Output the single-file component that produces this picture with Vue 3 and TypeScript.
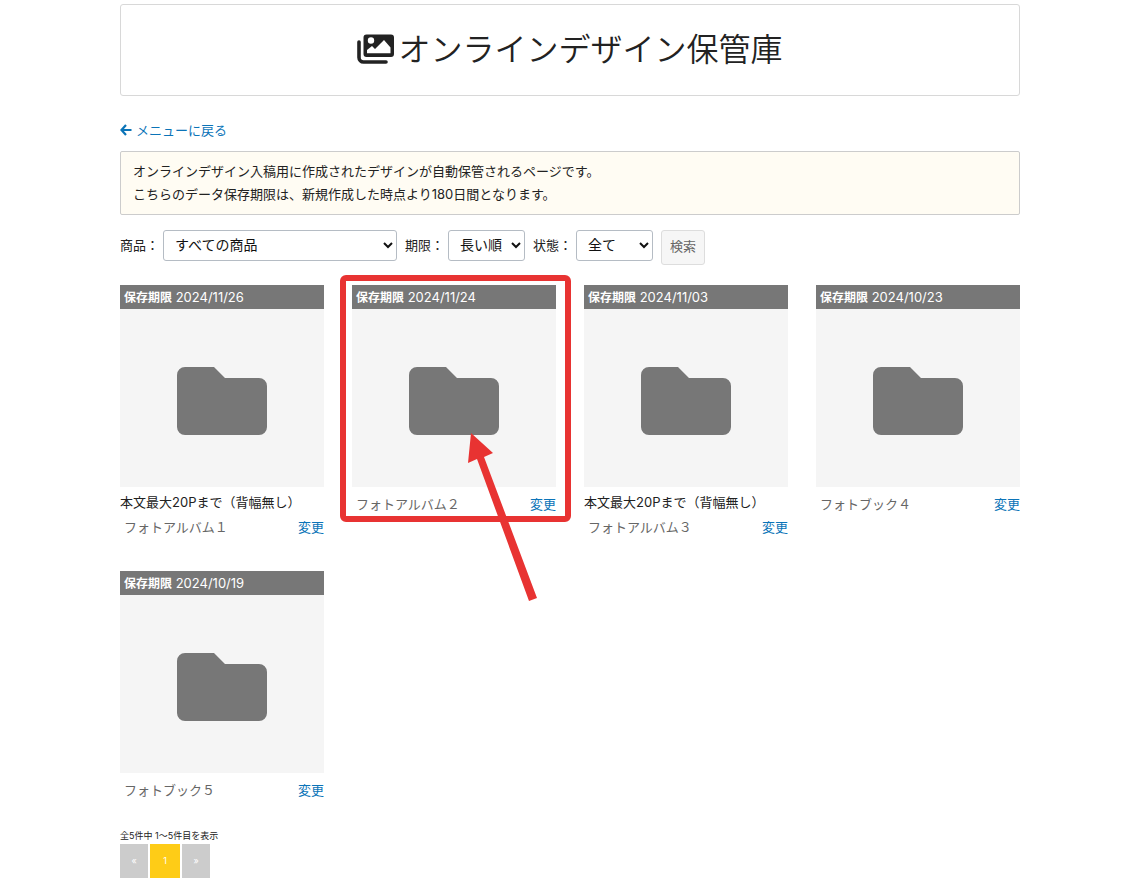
<script setup lang="ts">
import { ref } from 'vue'

interface Design {
  id: number
  expires: string
  title?: string
  name: string
  marked?: boolean
}

const product = ref('すべての商品')
const order = ref('長い順')
const state = ref('全て')

const designs: Design[] = [
  { id: 1, expires: '2024/11/26', title: '本文最大20Pまで（背幅無し）', name: 'フォトアルバム１' },
  { id: 2, expires: '2024/11/24', name: 'フォトアルバム２', marked: true },
  { id: 3, expires: '2024/11/03', title: '本文最大20Pまで（背幅無し）', name: 'フォトアルバム３' },
  { id: 4, expires: '2024/10/23', name: 'フォトブック４' },
  { id: 5, expires: '2024/10/19', name: 'フォトブック５' },
]
</script>

<template>
  <main class="page">
    <header class="hero">
      <h1>
        <svg class="hero-icon" viewBox="0 0 37 30" aria-hidden="true">
          <path d="M2 8V23.500a4.500 4.500 0 0 0 4.500 4.500H29" fill="none" stroke="currentColor" stroke-width="3.600" stroke-linecap="round" />
          <path fill="currentColor" fill-rule="evenodd" d="M9.500 0.500H34a3 3 0 0 1 3 3V20a3 3 0 0 1-3 3H9.500a3 3 0 0 1-3-3V3.500a3 3 0 0 1 3-3ZM14 3.300a3.200 3.200 0 1 0 0 6.400a3.200 3.200 0 0 0 0-6.400ZM10 19.300H33.500V13.500L27 6L18 15L15 12L10 16Z" />
        </svg>
        <span>オンラインデザイン保管庫</span>
      </h1>
    </header>

    <a class="back" href="#">
      <svg viewBox="0 0 12 12" aria-hidden="true">
        <path d="M6 1 1.500 6 6 11M1.500 6H11.500" fill="none" stroke="currentColor" stroke-width="2.200" />
      </svg>
      <span>メニューに戻る</span>
    </a>

    <p class="notice">
      オンラインデザイン入稿用に作成されたデザインが自動保管されるページです。<br />
      こちらのデータ保存期限は、新規作成した時点より180日間となります。
    </p>

    <form class="filters" @submit.prevent>
      <label for="product">商品：</label>
      <select id="product" v-model="product" class="wide"><option>すべての商品</option></select>
      <label for="order">期限：</label>
      <select id="order" v-model="order"><option>長い順</option><option>短い順</option></select>
      <label for="state">状態：</label>
      <select id="state" v-model="state"><option>全て</option></select>
      <button type="submit">検索</button>
    </form>

    <section class="designs">
      <article v-for="d in designs" :key="d.id" class="card">
        <div class="expires"><b>保存期限</b> {{ d.expires }}</div>
        <div class="thumb">
          <svg viewBox="0 0 90 68" aria-hidden="true">
            <path fill="#777" d="M8 0H37L48 11H82a8 8 0 0 1 8 8V60a8 8 0 0 1-8 8H8a8 8 0 0 1-8-8V8a8 8 0 0 1 8-8Z" />
          </svg>
        </div>
        <div class="caption">
          <p v-if="d.title" class="title">{{ d.title }}</p>
          <div class="name-row">
            <span class="name">{{ d.name }}</span>
            <a href="#">変更</a>
          </div>
        </div>
        <template v-if="d.marked">
          <div class="marker"></div>
          <svg class="pointer" viewBox="0 0 70 170" aria-hidden="true">
            <path fill="#e83332" d="M4 0 26 20 17 24 70 165 62 168 10 26 1 30Z" />
          </svg>
        </template>
      </article>
    </section>

    <footer>
      <p class="count">全5件中 1〜5件目を表示</p>
      <nav class="pager" aria-label="ページ">
        <a href="#" aria-label="前へ">«</a>
        <a href="#" class="current" aria-current="page">1</a>
        <a href="#" aria-label="次へ">»</a>
      </nav>
    </footer>
  </main>
</template>

<style>
body {
  margin: 0;
  background: #fff;
}
</style>

<style scoped>
.page {
  max-width: 900px;
  margin: 0 auto;
  padding: 4px 0 12px;
  font: 13px/24px Inter, "Noto Sans CJK JP", sans-serif;
  color: #222;
}
p,
h1 {
  margin: 0;
}
a {
  color: #0b74b8;
  text-decoration: none;
}
.hero {
  padding: 20px 16px 22px;
  border: 1px solid #d8d8d8;
  border-radius: 3px;
}
h1 {
  display: flex;
  justify-content: center;
  align-items: center;
  gap: 4px;
  font: 350 32px/48px "Noto Sans CJK JP", sans-serif;
}
h1 span {
  line-height: 44px;
  padding-bottom: 4px;
}
.hero-icon {
  width: 37px;
  height: 30px;
}
.back {
  display: flex;
  align-items: center;
  gap: 4px;
  width: fit-content;
  margin: 22px 0 9px;
}
.back svg {
  width: 12px;
  height: 12px;
}
.notice {
  padding: 8px 12px;
  border: 1px solid #ccc;
  border-radius: 2px;
  background: #fffcf3;
  line-height: 23px;
}
.filters {
  display: flex;
  align-items: flex-start;
  margin: 15px 0 20px;
}
.filters label {
  line-height: 31px;
  margin-right: 4px;
}
.filters select {
  width: 77px;
  height: 31px;
  margin-right: 8px;
  padding: 0 0 2px 7px;
  border: 1px solid #b5bcc4;
  border-radius: 3px;
  background: #fff;
  color: #111;
  font: 14px Inter, "Noto Sans CJK JP", sans-serif;
}
.filters .wide {
  width: 234px;
}
.filters button {
  width: 44px;
  height: 35px;
  padding: 0 0 3px;
  border: 1px solid #ddd;
  border-radius: 3px;
  background: #f6f6f6;
  color: #666;
  font: inherit;
}
.designs {
  display: grid;
  grid-template-columns: repeat(4, 1fr);
  gap: 31px 28px;
}
.card {
  position: relative;
}
.expires {
  padding: 0 4px;
  background: #777;
  color: #fff;
}
.expires b {
  font-size: 12px;
  line-height: 16px;
}
.thumb {
  display: flex;
  justify-content: center;
  padding: 58px 0 52px;
  background: #f5f5f5;
}
.thumb svg {
  width: 90px;
  height: 68px;
}
.caption {
  padding-top: 4px;
}
.title {
  line-height: 23px;
}
.name-row {
  display: flex;
  justify-content: space-between;
  line-height: 26px;
}
.name {
  padding-left: 4px;
  color: #666;
}
.marker {
  position: absolute;
  top: -10px;
  left: -12px;
  width: calc(100% + 27px);
  height: 247px;
  box-sizing: border-box;
  border: 6px solid #e83332;
  border-radius: 6px;
}
.pointer {
  position: absolute;
  top: 148px;
  left: 115px;
  width: 70px;
  height: 170px;
}
footer {
  margin-top: 24px;
}
.count {
  font-size: 9px;
  line-height: 17px;
}
.pager {
  display: flex;
  gap: 2px;
}
.pager a {
  width: 28px;
  background: #ccc;
  color: #fff;
  font-size: 9px;
  line-height: 34px;
  text-align: center;
}
.pager .current {
  width: 30px;
  background: #fecc17;
}
</style>
